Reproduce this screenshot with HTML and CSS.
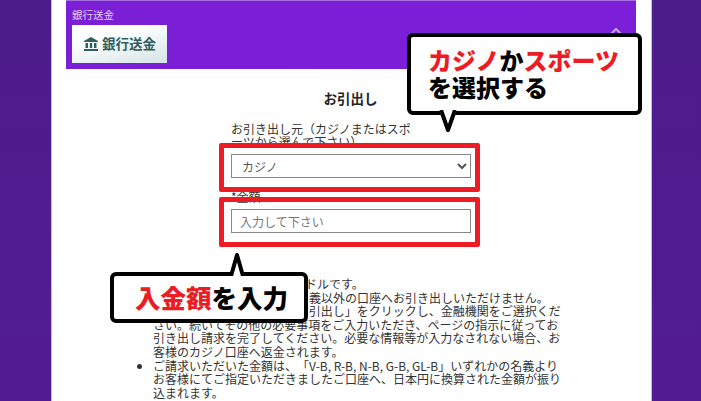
FILE: index.html
```html
<!DOCTYPE html>
<html lang="ja">
<head>
<meta charset="utf-8">
<title>お引出し</title>
<link rel="stylesheet" href="styles.css">
</head>
<body>
<div class="shell">
  <div class="side side-left"></div>
  <main class="page">
    <header class="method">
      <div class="method-name">銀行送金</div>
      <div class="banner">
        <svg class="bank" viewBox="0 0 16 14" width="16" height="14"><path d="M8 0 15 4V5H1V4ZM2.500 6H5V11H2.500ZM6.800 6H9.200V11H6.800ZM11 6H13.500V11H11ZM1 12H15V14H1Z" fill="#2f5f63"/></svg>
        <span>銀行送金</span>
      </div>
      <svg class="caret" viewBox="0 0 12 7" width="12" height="7"><path d="M1 6 6 1 11 6" fill="none" stroke="#c9a6ee" stroke-width="2"/></svg>
    </header>
    <h1 class="title">お引出し</h1>
    <form class="form">
      <label class="label source-label">お引き出し元（カジノまたはスポーツから選んで下さい）</label>
      <select class="field select"><option>カジノ</option></select>
      <label class="label amount-label">*金額</label>
      <input class="field input" type="text" placeholder="入力して下さい">
    </form>
    <ul class="notes">
      <li>お引き出しの最低金額は100ドルです。<br>ご登録いただいたお客様の名義以外の口座へお引き出しいただけません。<br>まずは出金ページにある「お引出し」をクリックし、金融機関をご選択ください。続いてその他の必要事項をご入力いただき、ページの指示に従ってお引き出し請求を完了してください。必要な情報等が入力なされない場合、お客様のカジノ口座へ返金されます。</li>
      <li>ご請求いただいた金額は、「V-B, R-B, N-B, G-B, GL-B」いずれかの名義よりお客様にてご指定いただきましたご口座へ、日本円に換算された金額が振り込まれます。</li>
    </ul>
  </main>
  <div class="side"></div>
</div>

<div class="redbox redbox-select"></div>
<div class="redbox redbox-amount"></div>

<div class="callout callout-top">
  <svg class="tail tail-down" viewBox="0 0 24 24" width="24" height="24"><path d="M5 0 12 20 19 0" fill="#fff" stroke="#000" stroke-width="4" stroke-linejoin="round"/></svg>
  <p><em>カジノ</em>か<em>スポーツ</em><br>を選択する</p>
</div>
<div class="callout callout-bottom">
  <svg class="tail tail-up" viewBox="0 0 24 24" width="24" height="24"><path d="M6 24 12 3 18 24" fill="#fff" stroke="#000" stroke-width="4" stroke-linejoin="round"/></svg>
  <p><em>入金額</em>を入力</p>
</div>
</body>
</html>
```
FILE: styles.css
```css
html, body {
  margin: 0;
  padding: 0;
  height: 401px;
  overflow: hidden;
  background: #fff;
  font-family: "Noto Sans CJK JP", "Noto Sans", sans-serif;
  text-spacing-trim: space-all;
}
.shell {
  display: flex;
  height: 401px;
}
.side {
  flex: 1 1 0;
  background: linear-gradient(180deg, #4c1c8a 0%, #531b93 100%);
}
.side-left {
  flex: 0 0 51px;
}
.page {
  flex: 0 0 601px;
  box-sizing: border-box;
  height: 401px;
  overflow: hidden;
  background: #fff;
  border-left: 1px solid #cdb4ea;
  border-right: 1px solid #cdb4ea;
  color: #333;
}
.method {
  position: relative;
  box-sizing: border-box;
  height: 69px;
  margin: 0 15px 0 14px;
  padding: 7px 6px 0;
  background: linear-gradient(90deg, #7a1fd6, #7b20d8);
  border-top: 1px solid #a56fe0;
}
.method-name {
  font-size: 10.500px;
  line-height: 14px;
  color: #e4cff7;
}
.banner {
  display: flex;
  align-items: center;
  justify-content: center;
  gap: 3px;
  width: 95px;
  height: 38px;
  margin-top: 3px;
  background: linear-gradient(165deg, #ffffff 30%, #d6e4e6 100%);
  color: #2f5f63;
  font-size: 13.500px;
  font-weight: 700;
  line-height: 1;
}
.caret {
  position: absolute;
  top: 27px;
  right: 14px;
}
.title {
  margin: 21px 0 0;
  padding-right: 2px;
  font-size: 13.500px;
  line-height: 16px;
  font-weight: 700;
  color: #222;
  text-align: center;
}
.form {
  display: flex;
  flex-direction: column;
  align-items: flex-start;
  width: 240px;
  margin: 16px 0 0 179px;
}
.label {
  font-size: 12px;
  line-height: 13px;
  color: #333;
}
.source-label {
  width: 190px;
}
.field {
  box-sizing: border-box;
  width: 240px;
  height: 24px;
  border: 1px solid #8a8a8a;
  border-radius: 0;
  background: #fff;
  font-family: inherit;
  font-size: 12px;
  color: #555;
}
.select {
  margin-top: 6px;
  padding-left: 6px;
}
.amount-label {
  margin-top: 12px;
  height: 19px;
}
.input {
  padding: 0 8px;
}
.input::placeholder {
  color: #777;
}
.notes {
  width: 409px;
  margin: 44px 0 0 101px;
  padding: 0;
  font-size: 12px;
  line-height: 13.600px;
  color: #333;
}
.notes li {
  margin: 0;
}
.redbox {
  position: absolute;
  left: 219px;
  width: 261px;
  box-sizing: border-box;
  border: 5px solid #ed1c24;
  border-radius: 2px;
}
.redbox-select {
  top: 143px;
  height: 49px;
}
.redbox-amount {
  top: 197px;
  height: 50px;
}
.callout {
  position: absolute;
  box-sizing: border-box;
  background: #fff;
  border: 4px solid #000;
  border-radius: 6px;
  color: #000;
  font-weight: 900;
  font-size: 24px;
}
.callout p {
  margin: 0;
}
.callout em {
  font-style: normal;
  color: #ed1c24;
}
.callout-top {
  left: 407px;
  top: 33px;
  width: 235px;
  height: 82px;
  padding: 10px 0 0 17px;
  line-height: 26.500px;
}
.callout-bottom {
  left: 110px;
  top: 272px;
  width: 198px;
  height: 51px;
  padding: 3px 0 0 21px;
  font-size: 25.500px;
  line-height: 36px;
}
.tail {
  position: absolute;
  display: block;
}
.tail-down {
  left: 25px;
  bottom: -23px;
}
.tail-up {
  left: 111px;
  top: -24px;
}
```
